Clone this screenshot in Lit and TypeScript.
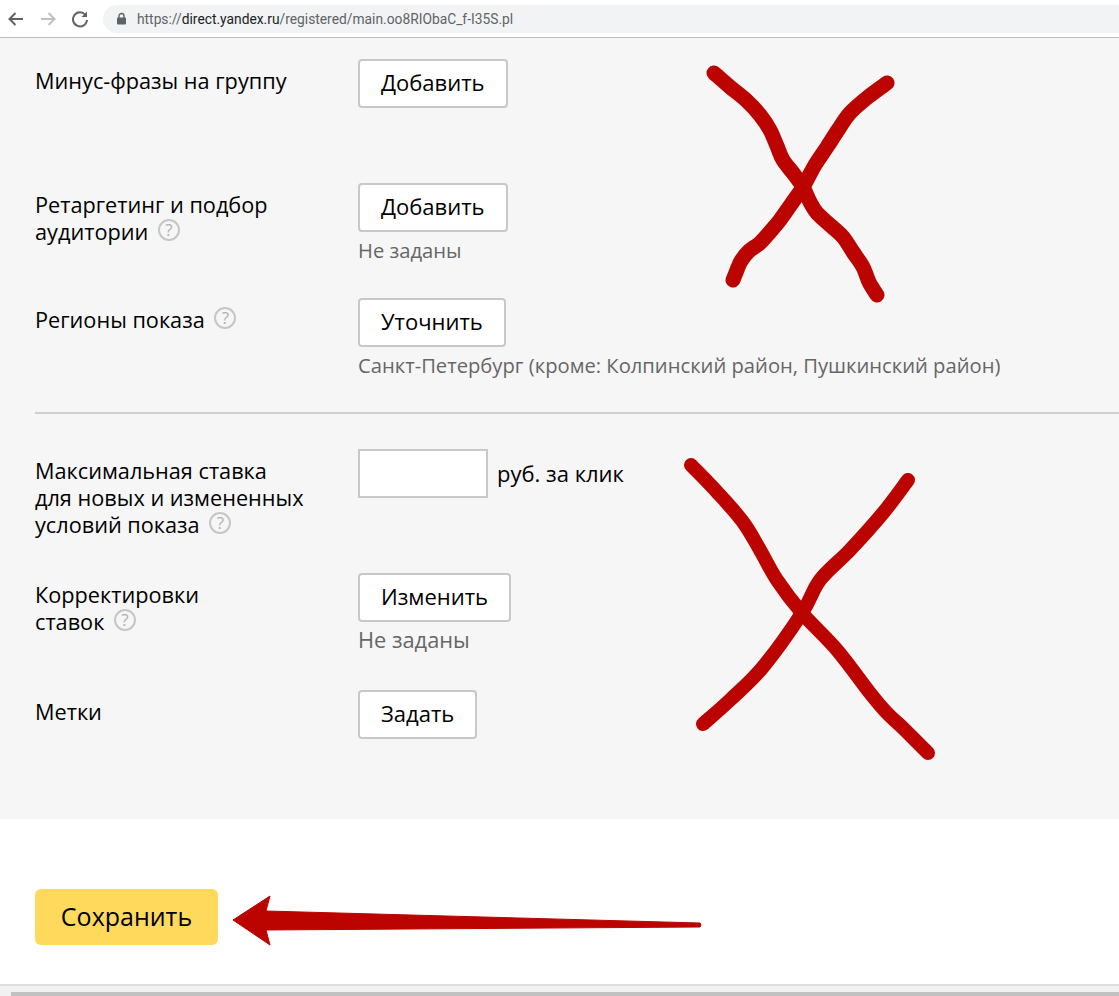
import { LitElement, html, css, svg } from "lit";
import { customElement } from "lit/decorators.js";

const hint = html`<span class="hint" aria-label="help">?</span>`;

type P = [number, number];
function smooth(p: P[]): string {
  let d = `M${p[0][0]} ${p[0][1]}`;
  for (let i = 0; i < p.length - 1; i++) {
    const a = p[Math.max(i - 1, 0)], b = p[i], c = p[i + 1], e = p[Math.min(i + 2, p.length - 1)];
    const c1x = b[0] + (c[0] - a[0]) / 6, c1y = b[1] + (c[1] - a[1]) / 6;
    const c2x = c[0] - (e[0] - b[0]) / 6, c2y = c[1] - (e[1] - b[1]) / 6;
    d += ` C${c1x.toFixed(1)} ${c1y.toFixed(1)} ${c2x.toFixed(1)} ${c2y.toFixed(1)} ${c[0]} ${c[1]}`;
  }
  return d;
}

const strokes: { pts: P[]; w: number }[] = [
  { w: 15, pts: [[714,73],[730,87],[747,101],[760,115],[770,130],[777,146],[783,160],[793,173],[803,187],[810,202],[817,213],[830,225],[843,237],[853,252],[863,267],[869,282],[877,295]] },
  { w: 15, pts: [[887,83],[868,97],[850,113],[838,130],[827,147],[815,165],[803,187],[792,203],[780,220],[770,232],[760,243],[749,251],[741,261],[737,270],[733,280]] },
  { w: 14, pts: [[691,465],[717,492],[743,522],[760,550],[777,580],[802,613],[837,650],[870,693],[887,713],[903,728],[928,753]] },
  { w: 14, pts: [[908,480],[883,513],[850,550],[820,580],[802,613],[763,667],[730,700],[703,724]] },
];

@customElement("app-root")
export class AppRoot extends LitElement {
  static styles = css`
    :host { display: block; position: relative; width: 1119px; height: 996px; overflow: hidden; background: #fff;
      font-family: "Open Sans", "Noto Sans", sans-serif; color: #000; }
    .toolbar { box-sizing: border-box; display: flex; align-items: center; background: #fff; border-bottom: 1px solid #bdbdbd; padding-left: 7px; height: 38px; }
    .nav { display: block; width: 18px; height: 18px; margin-right: 14px; }
    .omni { flex: 1; height: 28px; display: flex; align-items: center; background: #f1f3f4; border-radius: 14px 0 0 14px; padding-left: 13px; font-size: 13.8px; color: #5f6368; font-family: "Roboto", sans-serif; }
    .omni b { font-weight: 400; color: #202124; }
    .lock { width: 11px; height: 13px; margin-right: 10px; }
    .panel { background: #f6f6f6; height: 781px; box-sizing: border-box; padding: 21px 0 0 35px; }
    .row { display: grid; grid-template-columns: 323px 1fr; align-items: start; }
    .h124 { height: 124px; } .h115 { height: 115px; } .h114 { height: 114px; } .h117 { height: 117px; }
    .label { font-size: 21.7px; line-height: 27px; padding-top: 8px; }
    .btn { display: inline-flex; align-items: center; height: 49px; box-sizing: border-box; padding: 0 21px 3px; background: #fff; border: 2px solid #c8c8c8; border-radius: 4px; font-size: 22px; font-family: inherit; color: #000; }
    .sub { font-size: 20.2px; color: #666; line-height: 26px; margin-top: 5px; }
    .wide { font-size: 21.8px; }
    .divider { height: 2px; background: #cfcfcf; margin-bottom: 35px; }
    .inline { display: flex; align-items: flex-start; }
    .field { width: 130px; height: 49px; box-sizing: border-box; border: 2px solid #c8c8c8; background: #fff; padding: 0; margin: 0; border-radius: 0; outline: none; }
    .unit { font-size: 22px; line-height: 27px; margin: 11px 0 0 9px; }
    .hint { display: inline-flex; align-items: center; justify-content: center; width: 22px; height: 22px; box-sizing: border-box; border: 2px solid #c6c6c6; border-radius: 50%; color: #b0b0b0; font-size: 17px; line-height: 1; margin-left: 4px; vertical-align: 4px; }
    .foot { padding: 70px 0 0 35px; height: 167px; box-sizing: border-box; border-bottom: 2px solid #dedede; }
    .save { display: inline-flex; align-items: center; justify-content: center; width: 183px; height: 56px; background: #ffd95c; border-radius: 6px; border: 0; font-size: 25px; font-family: inherit; color: #000; padding: 0 0 2px; }
    .scroll { height: 10px; background: #f1f1f1; padding: 6px 0 0 11px; box-sizing: border-box; }
    .thumb { height: 4px; background: #c1c1c1; }
    .marks { position: absolute; left: 0; top: 0; pointer-events: none; }
  `;

  private marks() {
    return svg`
      ${strokes.map((s) => svg`<path d=${smooth(s.pts)} fill="none" stroke="#bb0400" stroke-width=${s.w} stroke-linecap="round" stroke-linejoin="round"/>`)}
      <path d="M233 920 L270 896 L266 911 L700 923 Q702 925 700 927 L266 930 L270 945 Z" fill="#bb0400" stroke="#bb0400" stroke-width="1" stroke-linejoin="round"/>
    `;
  }

  render() {
    return html`
      <div class="toolbar">
        <svg class="nav" viewBox="0 0 18 18"><path d="M16 9H3M8.5 3 2.5 9l6 6" fill="none" stroke="#5f6368" stroke-width="2"/></svg>
        <svg class="nav" viewBox="0 0 18 18"><path d="M2 9h13M9.5 3l6 6-6 6" fill="none" stroke="#bdc1c6" stroke-width="2"/></svg>
        <svg class="nav" viewBox="0 0 18 18"><path d="M14.5 5A7 7 0 1 0 16 10" fill="none" stroke="#5f6368" stroke-width="2"/><path d="M16 1.5V7h-5.5z" fill="#5f6368"/></svg>
        <div class="omni">
          <svg class="lock" viewBox="0 0 11 13"><path d="M3 6V4a2.5 2.5 0 0 1 5 0v2" fill="none" stroke="#5f6368" stroke-width="1.4"/><rect x="1" y="5.5" width="9" height="7" rx="1" fill="#5f6368"/></svg>
          <span>https://<b>direct.yandex.ru</b>/registered/main.oo8RIObaC_f-I35S.pl</span>
        </div>
      </div>
      <div class="panel">
        <div class="row h124"><div class="label">Минус-фразы на группу</div><div><span class="btn">Добавить</span></div></div>
        <div class="row h115"><div class="label">Ретаргетинг и подбор<br />аудитории ${hint}</div><div><span class="btn">Добавить</span><div class="sub">Не заданы</div></div></div>
        <div class="row h114"><div class="label">Регионы показа ${hint}</div><div><span class="btn">Уточнить</span><div class="sub">Санкт-Петербург (кроме: Колпинский район, Пушкинский район)</div></div></div>
        <div class="divider"></div>
        <div class="row h124"><div class="label">Максимальная ставка<br />для новых и измененных<br />условий показа ${hint}</div><div class="inline"><input class="field" /><span class="unit">руб. за клик</span></div></div>
        <div class="row h117"><div class="label">Корректировки<br />ставок ${hint}</div><div><span class="btn">Изменить</span><div class="sub wide">Не заданы</div></div></div>
        <div class="row"><div class="label">Метки</div><div><span class="btn">Задать</span></div></div>
      </div>
      <div class="foot"><button class="save">Сохранить</button></div>
      <div class="scroll"><div class="thumb"></div></div>
      <svg class="marks" width="1119" height="996" viewBox="0 0 1119 996">${this.marks()}</svg>
    `;
  }
}
